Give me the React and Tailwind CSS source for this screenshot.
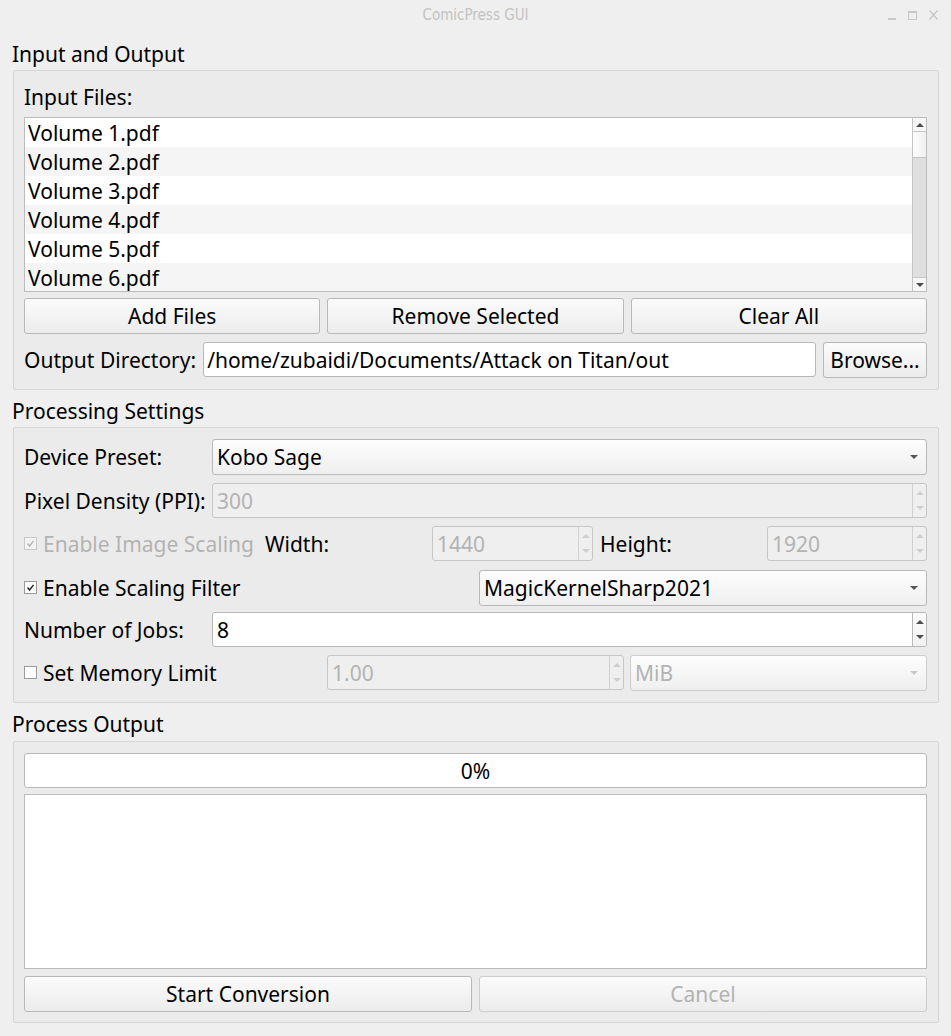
import React from 'react';

const files = ['Volume 1.pdf', 'Volume 2.pdf', 'Volume 3.pdf', 'Volume 4.pdf', 'Volume 5.pdf', 'Volume 6.pdf'];

const UpTri = ({ disabled }) => (
  <div className={`w-0 h-0 border-x-[4px] border-x-transparent border-b-[4px] ${disabled ? 'border-b-[#cfcfcf]' : 'border-b-[#4d4d4d]'}`} />
);

const DownTri = ({ disabled }) => (
  <div className={`w-0 h-0 border-x-[4px] border-x-transparent border-t-[4px] ${disabled ? 'border-t-[#cfcfcf]' : 'border-t-[#4d4d4d]'}`} />
);

const Button = ({ children, disabled, className = '' }) => (
  <div
    className={`h-[36px] flex items-center justify-center rounded-[3px] border border-[#b8b8b8] bg-gradient-to-b from-[#fbfbfb] to-[#ececec] ${disabled ? 'text-[#b3b3b3] border-[#cdcdcd]' : 'text-black'} ${className}`}
  >
    {children}
  </div>
);

const Combo = ({ value, disabled, className = '' }) => (
  <div
    className={`h-[36px] flex items-center justify-between pl-[4px] pr-[8px] rounded-[3px] border bg-gradient-to-b from-[#fdfdfd] to-[#efefef] ${disabled ? 'border-[#cdcdcd] text-[#b3b3b3]' : 'border-[#b8b8b8] text-black'} ${className}`}
  >
    <span>{value}</span>
    <div className={`w-0 h-0 border-x-[4px] border-x-transparent border-t-[4px] ${disabled ? 'border-t-[#c8c8c8]' : 'border-t-[#555]'}`} />
  </div>
);

const Spin = ({ value, disabled, className = '' }) => (
  <div
    className={`h-[35px] flex rounded-[3px] border overflow-hidden ${disabled ? 'border-[#c6c6c6] bg-[#efefef] text-[#b3b3b3]' : 'border-[#b8b8b8] bg-white text-black'} ${className}`}
  >
    <div className="flex-1 flex items-center pl-[4px]">{value}</div>
    <div className={`w-[14px] flex flex-col border-l ${disabled ? 'border-l-[#d0d0d0]' : 'border-l-[#b8b8b8] bg-gradient-to-b from-[#fdfdfd] to-[#f1f1f1]'}`}>
      <div className="flex-1 flex items-center justify-center pt-[2px]">
        <UpTri disabled={disabled} />
      </div>
      <div className="flex-1 flex items-center justify-center pb-[2px]">
        <DownTri disabled={disabled} />
      </div>
    </div>
  </div>
);

const Check = ({ checked, disabled }) => (
  <div className={`w-[13px] h-[13px] border flex items-center justify-center ${disabled ? 'border-[#c8c8c8] bg-[#f3f3f3]' : 'border-[#9a9a9a] bg-white'}`}>
    {checked && (
      <svg width="9" height="9" viewBox="0 0 9 9">
        <path d="M1.5 4.5 L3.6 7 L7.5 1.8" fill="none" stroke={disabled ? '#b5b5b5' : '#222'} strokeWidth="1.4" />
      </svg>
    )}
  </div>
);

const CheckLabel = ({ checked, disabled, label, className = '' }) => (
  <div className={`flex items-center gap-[6px] ${disabled ? 'text-[#b3b3b3]' : 'text-black'} ${className}`}>
    <Check checked={checked} disabled={disabled} />
    <span>{label}</span>
  </div>
);

const SectionTitle = ({ children, className = '' }) => (
  <div className={`ml-[12px] h-[28px] leading-[28px] ${className}`}>{children}</div>
);

const Frame = ({ children, className = '' }) => (
  <div className={`ml-[13px] w-[926px] border border-[#d6d6d6] rounded-[2px] bg-[#ebebeb] pl-[10px] pr-[11px] ${className}`}>
    {children}
  </div>
);

export default function App() {
  return (
    <div className="w-[951px] h-[1036px] bg-[#efefef] font-['Noto_Sans',sans-serif] text-[21px] leading-[28px] text-black overflow-hidden">
      {/* Title bar */}
      <div className="h-[30px] relative flex items-center justify-center">
        <span className="font-['DejaVu_Sans_Condensed','DejaVu_Sans',sans-serif] text-[15px] text-[#c2c2c2]">ComicPress GUI</span>
        <div className="absolute right-[12px] top-[9px] flex items-center gap-[10px]">
          <svg width="10" height="12" viewBox="0 0 10 12">
            <rect x="1" y="9" width="8" height="2" fill="#c8c8c8" />
          </svg>
          <svg width="11" height="12" viewBox="0 0 11 12">
            <rect x="1.5" y="2.5" width="8" height="8" fill="none" stroke="#c8c8c8" strokeWidth="1" />
            <rect x="1.5" y="2.5" width="8" height="1.5" fill="#c8c8c8" />
          </svg>
          <svg width="11" height="12" viewBox="0 0 11 12">
            <path d="M1.5 1.5 L9.5 10.5 M9.5 1.5 L1.5 10.5" stroke="#c8c8c8" strokeWidth="1.5" />
          </svg>
        </div>
      </div>

      {/* Input and Output */}
      <SectionTitle className="mt-[10px]">Input and Output</SectionTitle>
      <Frame className="mt-[2px] h-[320px] pt-[12px]">
        <div className="h-[28px]">Input Files:</div>
        <div className="mt-[6px] h-[175px] border border-[#bcbcbc] bg-white flex">
          <div className="flex-1 overflow-hidden">
            {files.map((f, i) => (
              <div
                key={f}
                className={`h-[29px] pl-[3px] flex items-center ${i % 2 === 1 ? 'bg-[#f5f5f5]' : 'bg-white'}`}
              >
                {f}
              </div>
            ))}
          </div>
          <div className="w-[14px] flex flex-col border-l border-l-[#c4c4c4] bg-[#dfdfdf]">
            <div className="h-[14px] bg-[#f6f6f6] border-b border-b-[#c8c8c8] flex items-center justify-center">
              <UpTri />
            </div>
            <div className="h-[26px] bg-gradient-to-r from-[#fdfdfd] to-[#f0f0f0] border-b border-b-[#c4c4c4]" />
            <div className="flex-1" />
            <div className="h-[14px] bg-[#f6f6f6] border-t border-t-[#c8c8c8] flex items-center justify-center">
              <DownTri />
            </div>
          </div>
        </div>
        <div className="mt-[6px] flex gap-[7px]">
          <Button className="flex-1">Add Files</Button>
          <Button className="flex-1">Remove Selected</Button>
          <Button className="flex-1">Clear All</Button>
        </div>
        <div className="mt-[8px] flex items-center gap-[7px] h-[35px]">
          <span>Output Directory:</span>
          <div className="flex-1 h-[35px] bg-white border border-[#b8b8b8] rounded-[3px] flex items-center pl-[3px]">
            /home/zubaidi/Documents/Attack on Titan/out
          </div>
          <Button className="w-[104px] h-[35px]">Browse...</Button>
        </div>
      </Frame>

      {/* Processing Settings */}
      <SectionTitle className="mt-[7px]">Processing Settings</SectionTitle>
      <Frame className="mt-[2px] h-[276px] pt-[11px]">
        <div className="flex items-center h-[36px]">
          <span className="w-[188px]">Device Preset:</span>
          <Combo value="Kobo Sage" className="flex-1" />
        </div>
        <div className="mt-[8px] flex items-center h-[35px]">
          <span className="w-[188px]">Pixel Density (PPI):</span>
          <Spin value="300" disabled className="flex-1" />
        </div>
        <div className="mt-[9px] flex items-center h-[33px]">
          <CheckLabel checked disabled label="Enable Image Scaling" className="w-[241px]" />
          <span className="w-[167px]">Width:</span>
          <Spin value="1440" disabled className="w-[161px] h-[33px]" />
          <span className="ml-[7px] w-[167px]">Height:</span>
          <Spin value="1920" disabled className="flex-1 h-[33px]" />
        </div>
        <div className="mt-[10px] flex items-center h-[35px]">
          <CheckLabel checked label="Enable Scaling Filter" className="w-[455px]" />
          <Combo value="MagicKernelSharp2021" className="flex-1 h-[35px]" />
        </div>
        <div className="mt-[7px] flex items-center h-[35px]">
          <span className="w-[188px]">Number of Jobs:</span>
          <Spin value="8" className="flex-1" />
        </div>
        <div className="mt-[8px] flex items-center h-[35px]">
          <CheckLabel label="Set Memory Limit" className="w-[303px]" />
          <Spin value="1.00" disabled className="w-[297px]" />
          <Combo value="MiB" disabled className="ml-[6px] flex-1 h-[35px]" />
        </div>
      </Frame>

      {/* Process Output */}
      <SectionTitle className="mt-[7px]">Process Output</SectionTitle>
      <Frame className="mt-[3px] h-[282px] pt-[11px]">
        <div className="h-[35px] bg-white border border-[#b8b8b8] rounded-[3px] flex items-center justify-center">
          0%
        </div>
        <div className="mt-[6px] h-[175px] bg-white border border-[#bcbcbc]" />
        <div className="mt-[7px] flex gap-[7px]">
          <Button className="flex-1">Start Conversion</Button>
          <Button disabled className="flex-1">Cancel</Button>
        </div>
      </Frame>
    </div>
  );
}
